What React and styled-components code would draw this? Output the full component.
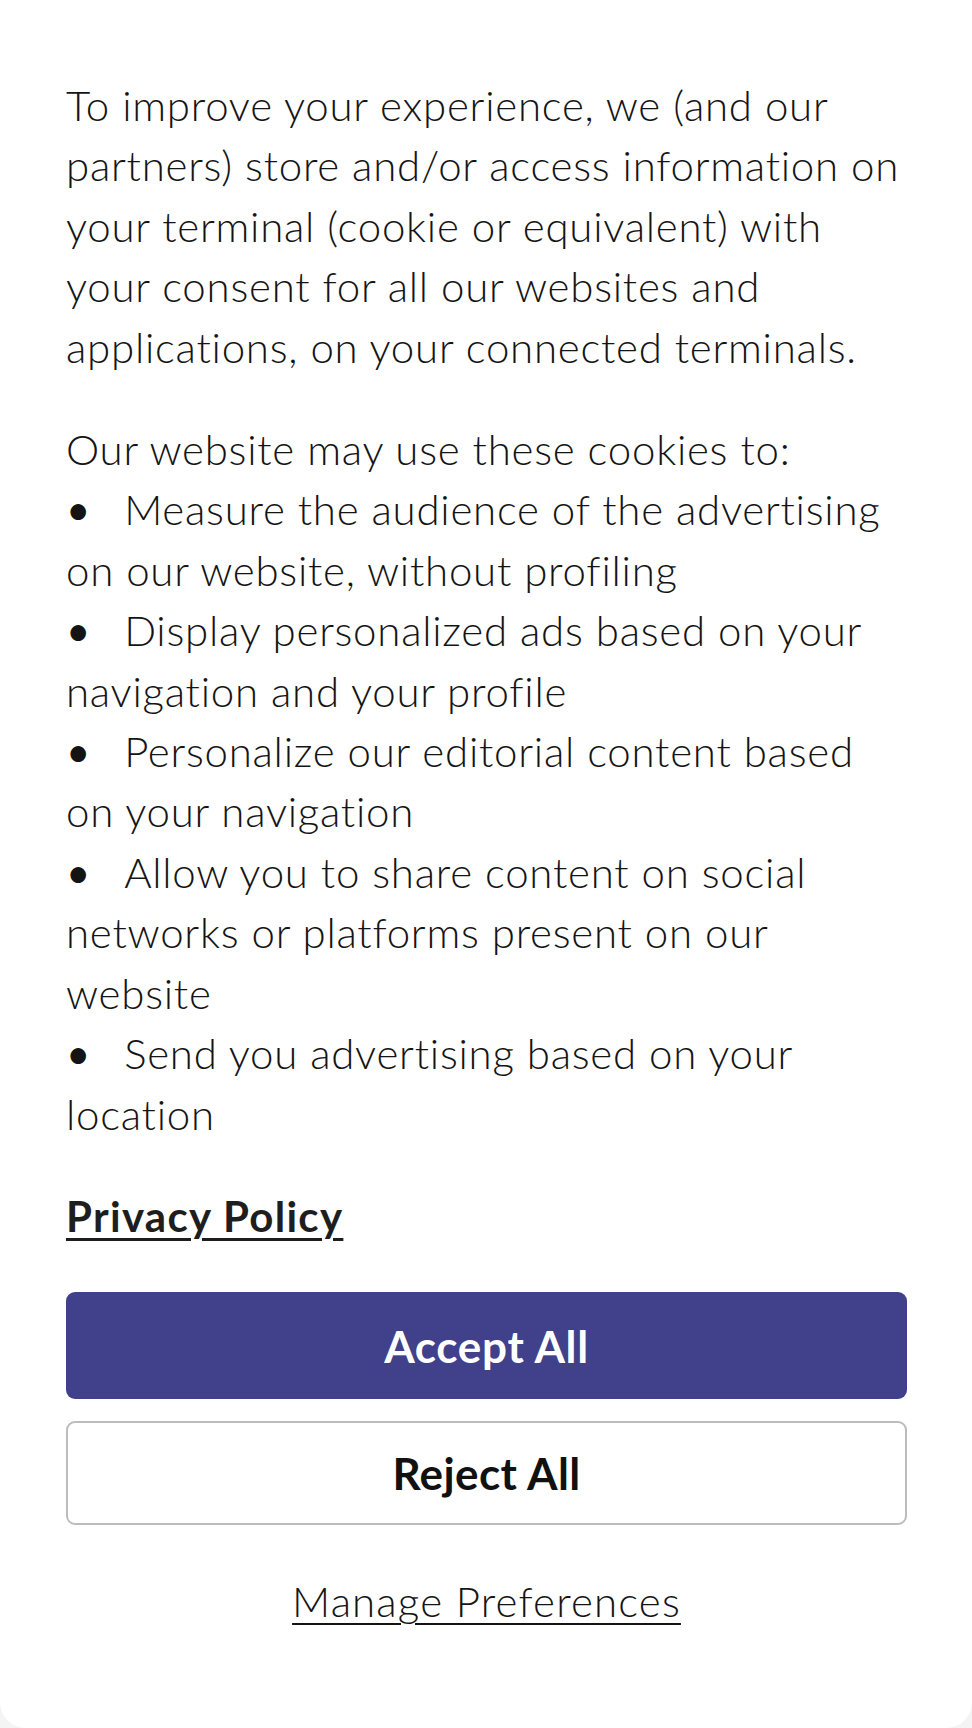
import React from 'react';
import styled, { createGlobalStyle } from 'styled-components';

const GlobalStyle = createGlobalStyle`
  html, body {
    margin: 0;
    padding: 0;
    background: #f4f4f4;
  }
  body {
    font-family: 'Lato', 'Liberation Sans', sans-serif;
    color: #141414;
  }
`;

const Card = styled.div`
  box-sizing: border-box;
  min-height: 1728px;
  background: #ffffff;
  border-radius: 0 0 26px 26px;
  padding: 75px 65px 60px 66px;
  display: flex;
  flex-direction: column;
`;

const Paragraph = styled.p`
  margin: 0 0 42px;
  font-size: 42px;
  line-height: 60.4px;
  font-weight: 300;
  letter-spacing: 0.75px;
`;

const Bullet = styled.span`
  display: inline-block;
  font-weight: 400;
  margin-right: 33px;
`;

const PolicyLink = styled.a`
  align-self: flex-start;
  font-size: 42px;
  line-height: 60.4px;
  font-weight: 700;
  letter-spacing: 1.3px;
  color: #1e1e1e;
  text-decoration: underline;
  text-underline-offset: 6px;
  text-decoration-thickness: 3px;
`;

const Actions = styled.div`
  display: flex;
  flex-direction: column;
  gap: 22px;
  margin-top: 46px;
`;

const Button = styled.button`
  box-sizing: border-box;
  width: 100%;
  height: ${(p) => (p.$primary ? '107px' : '104px')};
  border-radius: 9px;
  border: ${(p) => (p.$primary ? 'none' : '2px solid #bcbcbc')};
  background: ${(p) => (p.$primary ? '#40408b' : '#ffffff')};
  color: ${(p) => (p.$primary ? '#ffffff' : '#111111')};
  font-family: 'Lato', 'Liberation Sans', sans-serif;
  font-size: 44px;
  font-weight: 700;
  letter-spacing: ${(p) => (p.$primary ? '0.7px' : '0.4px')};
  cursor: pointer;
`;

const ManageLink = styled.a`
  align-self: center;
  margin-top: 46px;
  font-size: 42px;
  line-height: 60.4px;
  font-weight: 300;
  letter-spacing: 1.15px;
  color: #141414;
  text-decoration: underline;
  text-underline-offset: 6px;
  text-decoration-thickness: 2px;
`;

const purposes = [
  'Measure the audience of the advertising on our website, without profiling',
  'Display personalized ads based on your navigation and your profile',
  'Personalize our editorial content based on your navigation',
  'Allow you to share content on social networks or platforms present on our website',
  'Send you advertising based on your location',
];

export default function App() {
  return (
    <>
      <GlobalStyle />
      <Card>
        <Paragraph>
          To improve your experience, we (and our partners) store and/or access
          information on your terminal (cookie or equivalent) with your consent
          for all our websites and applications, on your connected terminals.
        </Paragraph>
        <Paragraph>
          Our website may use these cookies to:
          {purposes.map((item) => (
            <React.Fragment key={item}>
              <br />
              <Bullet>•</Bullet>
              {item}
            </React.Fragment>
          ))}
        </Paragraph>
        <PolicyLink href="#">Privacy Policy</PolicyLink>
        <Actions>
          <Button $primary>Accept All</Button>
          <Button>Reject All</Button>
        </Actions>
        <ManageLink href="#">Manage Preferences</ManageLink>
      </Card>
    </>
  );
}
